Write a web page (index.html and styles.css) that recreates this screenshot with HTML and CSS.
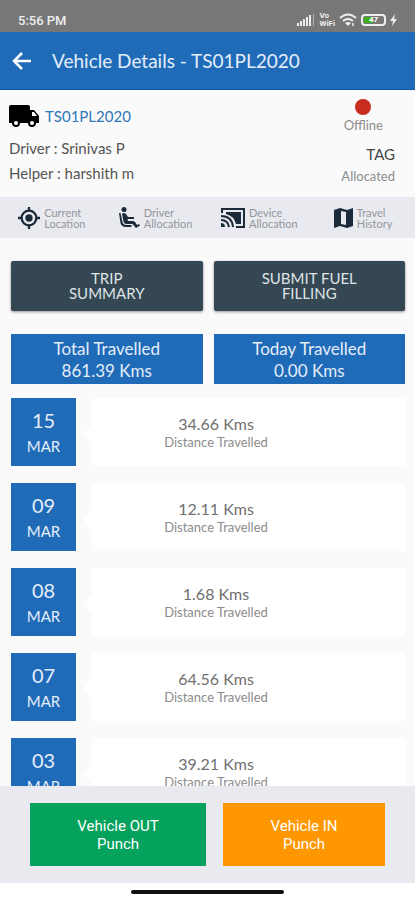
FILE: index.html
```html
<!DOCTYPE html>
<html lang="en">
<head>
  <meta charset="UTF-8">
  <meta name="viewport" content="width=device-width, initial-scale=1.0">
  <title>Vehicle Details</title>

  <link rel="stylesheet" href="styles.css">
</head>
<body>
  <div class="status-bar">
    <span class="time">5:56 PM</span>
    <div class="status-icons">
      <svg width="18" height="12" viewBox="0 0 18 12" fill="#eee">
        <rect x="0" y="9" width="2" height="3"/>
        <rect x="3" y="7" width="2" height="5"/>
        <rect x="6" y="5" width="2" height="7"/>
        <rect x="9" y="3" width="2" height="9"/>
        <rect x="12" y="1" width="2" height="11"/>
        <rect x="16" y="0" width="1" height="12" opacity=".5"/>
      </svg>
      <span class="vowifi">Vo<br>WiFi</span>
      <svg width="18" height="14" viewBox="0 0 18 14" fill="none" stroke="#eee" stroke-width="2">
        <path d="M1 5q8-7 16 0M4 8q5-4 10 0"/>
        <path d="M6 10q3-2 6 0l-3 3z" fill="#eee" stroke="none"/>
        <path d="M14 10v3" stroke-width="1.5"/>
      </svg>
      <span class="battery"><span class="battery-level">47</span></span>
      <svg width="7" height="12" viewBox="0 0 7 12" fill="#eee"><path d="M5 0 0 7h3l-1 5 5-7H4z"/></svg>
    </div>
  </div>

  <header class="app-bar">
    <button class="back" type="button" aria-label="Back">
      <svg width="20" height="20" viewBox="0 0 20 20" fill="none" stroke="#fff" stroke-width="2.5"><path d="M10 2 2 10l8 8M2 10h17"/></svg>
    </button>
    <h1>Vehicle Details - TS01PL2020</h1>
  </header>

  <section class="vehicle">
    <div class="vehicle-info">
      <h2>
        <svg width="30" height="22" viewBox="0 0 30 22">
          <path d="M2 0h17q2 0 2 2v3h4l5 6v7H0V2q0-2 2-2z"/>
          <path d="M23 7h2l3 4h-5z" fill="#fff"/>
          <circle cx="7" cy="18" r="4"/><circle cx="7" cy="18" r="2" fill="#fff"/>
          <circle cx="23" cy="18" r="4"/><circle cx="23" cy="18" r="2" fill="#fff"/>
        </svg>
        <a href="#">TS01PL2020</a>
      </h2>
      <p>Driver : Srinivas P</p>
      <p>Helper : harshith m</p>
    </div>
    <div class="vehicle-state">
      <div class="offline"><span class="dot"></span>Offline</div>
      <div class="tag">TAG</div>
      <div class="allocated">Allocated</div>
    </div>
  </section>

  <nav class="tabs">
    <button type="button">
      <svg width="22" height="22" viewBox="0 0 24 24" fill="none" stroke="#1c2b3a" stroke-width="2.5">
        <circle cx="12" cy="12" r="8"/><path d="M12 0v4M12 20v4M0 12h4M20 12h4"/><circle cx="12" cy="12" r="4" fill="#1c2b3a" stroke="none"/>
      </svg>
      <span>Current<br>Location</span>
    </button>
    <button type="button">
      <svg width="21" height="22" viewBox="0 0 21 22" fill="#1c2b3a">
        <circle cx="5" cy="2.5" r="2.5"/>
        <path d="M0 6h1.500l2 9q.5 3 4 3h5v2H7q-4.500 0-5.500-4z"/>
        <path d="M3 7q2-2 4 0l2 3h6v2H8.500l.5 2h5q1.500 0 2.500 1.500l1.500 2.500 2-1 1 1.500-4 2.500-3.500-4H7.500q-2.500 0-3-2.500z"/>
      </svg>
      <span>Driver<br>Allocation</span>
    </button>
    <button type="button">
      <svg width="24" height="20" viewBox="0 0 24 20" fill="none" stroke="#1c2b3a" stroke-width="2">
        <path d="M1 5V1h22v18h-8"/>
        <path d="M5 4h15v12h-5Q13 8 5 6z" fill="#1c2b3a" stroke="none"/>
        <path d="M0 8q11 0 12 11M0 12q7 0 8 7"/>
        <path d="M0 15q4 0 4 4H0z" fill="#1c2b3a" stroke="none"/>
      </svg>
      <span>Device<br>Allocation</span>
    </button>
    <button type="button">
      <svg width="19" height="20" viewBox="0 0 19 20" fill="#1c2b3a">
        <path fill-rule="evenodd" d="M0 2 6 0l7 2 6-2v18l-6 2-7-2-6 2zM7 3v13l5 1V4z"/>
      </svg>
      <span>Travel<br>History</span>
    </button>
  </nav>

  <main class="content">
    <div class="pair">
      <button class="action" type="button">TRIP<br>SUMMARY</button>
      <button class="action" type="button">SUBMIT FUEL<br>FILLING</button>
    </div>
    <div class="pair">
      <div class="total">Total Travelled<br>861.39 Kms</div>
      <div class="total">Today Travelled<br>0.00 Kms</div>
    </div>
    <ul class="days">
      <li>
        <div class="date"><b>15</b>MAR</div>
        <div class="card"><strong>34.66 Kms</strong>Distance Travelled</div>
      </li>
      <li>
        <div class="date"><b>09</b>MAR</div>
        <div class="card"><strong>12.11 Kms</strong>Distance Travelled</div>
      </li>
      <li>
        <div class="date"><b>08</b>MAR</div>
        <div class="card"><strong>1.68 Kms</strong>Distance Travelled</div>
      </li>
      <li>
        <div class="date"><b>07</b>MAR</div>
        <div class="card"><strong>64.56 Kms</strong>Distance Travelled</div>
      </li>
      <li>
        <div class="date"><b>03</b>MAR</div>
        <div class="card"><strong>39.21 Kms</strong>Distance Travelled</div>
      </li>
    </ul>
  </main>

  <footer class="punch-bar">
    <button class="punch out" type="button">Vehicle OUT<br>Punch</button>
    <button class="punch in" type="button">Vehicle IN<br>Punch</button>
  </footer>
  <div class="home-bar"><span></span></div>
</body>
</html>
```
FILE: styles.css
```css
* {
  box-sizing: border-box;
}
body {
  display: flex;
  flex-direction: column;
  height: 100vh;
  margin: 0;
  background: #fafafa;
  color: #555;
  font-family: Lato, "Liberation Sans", sans-serif;
}
h1, h2, p, ul {
  margin: 0;
  padding: 0;
  font-weight: normal;
}
button {
  padding: 0;
  border: none;
  background: none;
  color: inherit;
  font-family: inherit;
  cursor: pointer;
}
svg {
  flex: none;
}

/* phone status bar */
.status-bar {
  display: flex;
  flex: none;
  align-items: center;
  justify-content: space-between;
  height: 32px;
  padding: 8px 18px 0;
  background: #777;
  color: #eee;
  font-family: Roboto, sans-serif;
}
.time {
  font-size: 13px;
  font-weight: 500;
}
.status-icons {
  display: flex;
  align-items: center;
  gap: 4px;
}
.vowifi {
  font-size: 8px;
  font-weight: 700;
  line-height: 8px;
}
.battery {
  width: 25px;
  height: 12px;
  padding: 1px;
  border: 2px solid #eee;
  border-radius: 4px;
}
.battery-level {
  display: block;
  height: 6px;
  background: linear-gradient(to right, #3db01c 50%, #777 50%);
  color: #fff;
  font-size: 8px;
  font-weight: 700;
  line-height: 6px;
  text-align: center;
}

/* title */
.app-bar {
  display: flex;
  flex: none;
  align-items: center;
  gap: 20px;
  height: 58px;
  padding: 0 12px;
  border-bottom: 1px solid #0f57a8;
  background: #206bb8;
  color: #e4eefa;
}
.back {
  display: flex;
}
h1 {
  font-size: 19px;
}

/* vehicle summary */
.vehicle {
  display: flex;
  flex: none;
  justify-content: space-between;
  height: 107px;
  padding: 6px 20px 0 9px;
}
.vehicle h2 {
  display: flex;
  align-items: center;
  gap: 6px;
  height: 40px;
  font-size: 15px;
}
.vehicle a {
  color: #3076b8;
  text-decoration: none;
}
.vehicle p {
  font-size: 15px;
  line-height: 25px;
}
.vehicle-state {
  display: flex;
  flex-direction: column;
  align-items: flex-end;
  font-size: 13px;
  color: #8c8c8c;
}
.offline {
  display: flex;
  flex-direction: column;
  align-items: center;
  gap: 3px;
  margin: 3px 12px 0 0;
  line-height: 15px;
}
.dot {
  width: 16px;
  height: 16px;
  border-radius: 50%;
  background: #c62d1f;
}
.tag {
  margin-top: 10px;
  color: #444;
  font-size: 15px;
  line-height: 22px;
}
.allocated {
  line-height: 22px;
}

/* shortcuts */
.tabs {
  display: grid;
  flex: none;
  grid-template-columns: repeat(4, 1fr);
  height: 41px;
  background: #e8eaef;
}
.tabs button {
  display: flex;
  align-items: center;
  justify-content: center;
  gap: 4px;
  color: #94969c;
  font-size: 11px;
  line-height: 11px;
  text-align: left;
}

.content {
  flex: 1;
  min-height: 0;
  padding: 23px 10px 0 11px;
  overflow-y: auto;
  scrollbar-width: none;
}
.pair {
  display: grid;
  grid-template-columns: 1fr 1fr;
  gap: 11px;
}
.action {
  height: 50px;
  margin-bottom: 23px;
  border-radius: 2px;
  background: #344752;
  box-shadow: 0 1px 3px rgba(0, 0, 0, .4);
  color: #dfe4e7;
  font-size: 15px;
  line-height: 15px;
}
.total {
  height: 50px;
  padding-top: 4px;
  background: #206bb8;
  color: #e4eefa;
  font-size: 17px;
  line-height: 22px;
  text-align: center;
}

/* day list */
.days {
  margin-top: 14px;
  list-style: none;
}
.days li {
  display: grid;
  grid-template-columns: 65px 1fr;
  gap: 16px;
  height: 68px;
  margin-bottom: 17px;
}
.date {
  padding-top: 9px;
  background: #206bb8;
  color: #e4eefa;
  font-size: 15px;
  line-height: 26px;
  text-align: center;
}
.date b {
  display: block;
  font-size: 20px;
  font-weight: normal;
}
.card {
  position: relative;
  padding: 16px 65px 0 0;
  background: #fff;
  color: #8c8c8c;
  font-size: 13px;
  line-height: 16px;
  text-align: center;
}
.card strong {
  display: block;
  color: #707070;
  font-size: 16px;
  font-weight: normal;
  line-height: 20px;
}
/* arrow pointing at the date */
.card::before {
  position: absolute;
  top: 26px;
  left: -9px;
  border: 10px solid transparent;
  border-right: 9px solid #fff;
  border-left: none;
  content: '';
}

.punch-bar {
  display: grid;
  flex: none;
  grid-template-columns: 176fr 162fr;
  gap: 17px;
  padding: 17px 30px;
  background: #e8eaef;
}
.punch {
  height: 63px;
  color: #fff;
  font-family: Roboto, sans-serif;
  font-size: 15px;
  line-height: 18px;
}
.out {
  background: #04a25c;
}
.in {
  background: #ff9800;
}
.home-bar {
  display: flex;
  flex: none;
  justify-content: center;
  height: 17px;
  padding-top: 7px;
  background: #fff;
}
.home-bar span {
  width: 153px;
  height: 4px;
  border-radius: 2px;
  background: #111;
}
```
